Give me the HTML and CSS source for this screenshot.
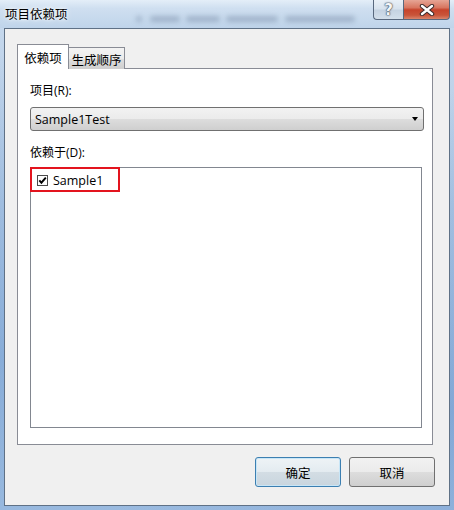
FILE: index.html
```
<!DOCTYPE html>
<html lang="zh-CN">
<head>
    <meta charset="UTF-8">
    <title>项目依赖项</title>
    <link rel="stylesheet" href="styles.css">
</head>
<body>
    <div class="window">
        <div class="titlebar">
            <!-- blurred stuff behind the glass -->
            <div class="backdrop">
                <span class="smudge s1"></span>
                <span class="smudge s2"></span>
                <span class="smudge s3"></span>
                <span class="smudge s4"></span>
                <span class="smudge s5"></span>
            </div>
            <span class="title">项目依赖项</span>
            <div class="caption-buttons">
                <button class="cap help">?</button>
                <button class="cap close">
                    <svg width="16" height="12" viewBox="0 0 16 12">
                        <path d="M3 2 L13 10 M13 2 L3 10" stroke="#3a2a2a" stroke-width="4.4" stroke-linecap="round"/>
                        <path d="M3 2 L13 10 M13 2 L3 10" stroke="#fff" stroke-width="2.4" stroke-linecap="round"/>
                    </svg>
                </button>
            </div>
        </div>

        <div class="client">
            <div class="tabs">
                <div class="tab active">依赖项</div>
                <div class="tab">生成顺序</div>
            </div>
            <div class="tab-panel">
                <div class="field-label">项目(R):</div>
                <div class="combo">
                    <span class="combo-text">Sample1Test</span>
                    <span class="arrow"></span>
                </div>
                <div class="field-label second">依赖于(D):</div>
                <div class="list">
                    <div class="list-item">
                        <svg class="check" width="11" height="11" viewBox="0 0 11 11">
                            <rect x="0.5" y="0.5" width="10" height="10" fill="#fdfdfd" stroke="#4a4a4a"/>
                            <path d="M2.3 5.4 L4.4 7.7 L8.8 2.6" fill="none" stroke="#000" stroke-width="1.9"/>
                        </svg>
                        <span>Sample1</span>
                    </div>
                    <div class="highlight"></div>
                </div>
            </div>
            <div class="actions">
                <button class="btn default">确定</button>
                <button class="btn">取消</button>
            </div>
        </div>
    </div>
</body>
</html>
```

FILE: styles.css
```
* {
    box-sizing: border-box;
    margin: 0;
    padding: 0;
}

body {
    width: 454px;
    height: 510px;
    overflow: hidden;
    font-family: 'Open Sans', 'Noto Sans CJK SC', sans-serif;
    font-size: 12px;
    color: #000;
    background:
        radial-gradient(ellipse at 0% 70%, rgba(90, 140, 200, 0.45), rgba(90, 140, 200, 0) 60%),
        radial-gradient(ellipse at 100% 80%, rgba(80, 130, 195, 0.45), rgba(80, 130, 195, 0) 55%),
        linear-gradient(180deg, #d6e4f3 0%, #c4d7ec 6%, #b3cbe6 40%, #a9c5e5 100%);
}

.window {
    display: flex;
    flex-direction: column;
    height: 510px;
}

/* Title bar */
.titlebar {
    position: relative;
    display: flex;
    align-items: flex-start;
    height: 28px;
    background: linear-gradient(180deg, #e4eef8 0%, #cfdff0 30%, #bfd4ea 100%);
}

.backdrop {
    position: absolute;
    left: 0;
    top: 0;
    width: 100%;
    height: 28px;
    filter: blur(2.4px);
}

.smudge {
    position: absolute;
    top: 16px;
    height: 6px;
    border-radius: 3px;
    background: rgba(80, 100, 130, 0.32);
}

.s1 { left: 136px; width: 6px; }
.s2 { left: 150px; width: 30px; }
.s3 { left: 186px; width: 34px; }
.s4 { left: 226px; width: 52px; }
.s5 { left: 285px; width: 70px; }

.title {
    position: relative;
    padding: 6px 0 0 5px;
    font-family: 'Noto Sans CJK SC', sans-serif;
    font-size: 12.5px;
    line-height: 16px;
    text-shadow: 0 0 6px #fff, 0 0 3px #fff;
}

.caption-buttons {
    position: relative;
    display: flex;
    margin-left: auto;
    margin-right: 4px;
}

.cap {
    height: 20px;
    border: 1px solid #58687e;
    border-top: none;
    cursor: pointer;
    display: flex;
    align-items: center;
    justify-content: center;
}

.help {
    width: 30px;
    border-right: none;
    border-radius: 0 0 0 4px;
    background: linear-gradient(180deg, #e9f0f7 0%, #d8e3ee 45%, #c5d3e2 55%, #d3dfeb 100%);
    font-family: 'DejaVu Sans', sans-serif;
    font-size: 15px;
    font-weight: bold;
    color: #f4f6f8;
    text-shadow: 0 0 1px #44505e, 0 0 1px #44505e, 0 0 2px #44505e;
}

.close {
    width: 47px;
    border-radius: 0 0 4px 0;
    background: linear-gradient(180deg, #e6a595 0%, #d87660 40%, #c6432b 52%, #c9553a 80%, #d9856c 100%);
}

/* Client area */
.client {
    display: flex;
    flex-direction: column;
    height: 478px;
    margin: 0 4px;
    padding: 15px 16px 0 12px;
    background: #f0f0f0;
    border: 1px solid #5f7186;
}

.tabs {
    display: flex;
    align-items: flex-end;
    height: 25px;
    margin-bottom: -1px;
}

.tab {
    position: relative;
    display: flex;
    align-items: center;
    justify-content: center;
    height: 22px;
    border: 1px solid #898c95;
    border-bottom: none;
    font-family: 'Noto Sans CJK SC', sans-serif;
    font-size: 12.5px;
    background: linear-gradient(180deg, #f3f3f3 0%, #ebebeb 50%, #dddddd 55%, #cfcfcf 100%);
}

.tab.active {
    z-index: 1;
    width: 52px;
    height: 25px;
    background: #fff;
}

.tab + .tab {
    width: 57px;
    margin-left: -1px;
    padding-top: 1px;
}

.tab-panel {
    display: flex;
    flex-direction: column;
    width: 416px;
    height: 377px;
    padding: 0 0 0 12px;
    background: #fff;
    border: 1px solid #898c95;
}

.field-label {
    margin-top: 14px;
    line-height: 16px;
}

.field-label.second {
    margin-top: 14px;
}

.combo {
    display: flex;
    align-items: center;
    width: 394px;
    height: 24px;
    margin-top: 8px;
    padding: 0 5px 0 4px;
    border: 1px solid #707070;
    border-radius: 3px;
    background: linear-gradient(180deg, #f2f2f2 0%, #ebebeb 50%, #dddddd 50%, #cfcfcf 100%);
}

.combo-text {
    flex: 1;
    font-size: 12.5px;
}

.arrow {
    width: 0;
    height: 0;
    border-left: 3.5px solid transparent;
    border-right: 3.5px solid transparent;
    border-top: 4px solid #000;
}

.list {
    position: relative;
    width: 392px;
    height: 261px;
    margin-top: 6px;
    border: 1px solid #828790;
    background: #fff;
}

.list-item {
    display: flex;
    align-items: center;
    gap: 5px;
    height: 20px;
    margin-top: 2px;
    padding-left: 6px;
    font-size: 12.5px;
}

.highlight {
    position: absolute;
    left: -1px;
    top: -1px;
    width: 90px;
    height: 25px;
    border: 2px solid #e3141e;
}

/* Buttons */
.actions {
    display: flex;
    justify-content: flex-end;
    gap: 8px;
    margin: 12px -2px 0 0;
}

.btn {
    width: 86px;
    height: 30px;
    border: 1px solid #707070;
    border-radius: 3px;
    font-family: 'Noto Sans CJK SC', sans-serif;
    font-size: 12.5px;
    color: #000;
    background: linear-gradient(180deg, #f2f2f2 0%, #ebebeb 50%, #dddddd 50%, #cfcfcf 100%);
    cursor: pointer;
}

.btn.default {
    border-color: #3c7fb1;
    box-shadow: inset 0 0 0 1px #c8e6f7;
    background: linear-gradient(180deg, #eef3f6 0%, #e3ebf0 50%, #d3dde4 50%, #c9d5de 100%);
}
```
